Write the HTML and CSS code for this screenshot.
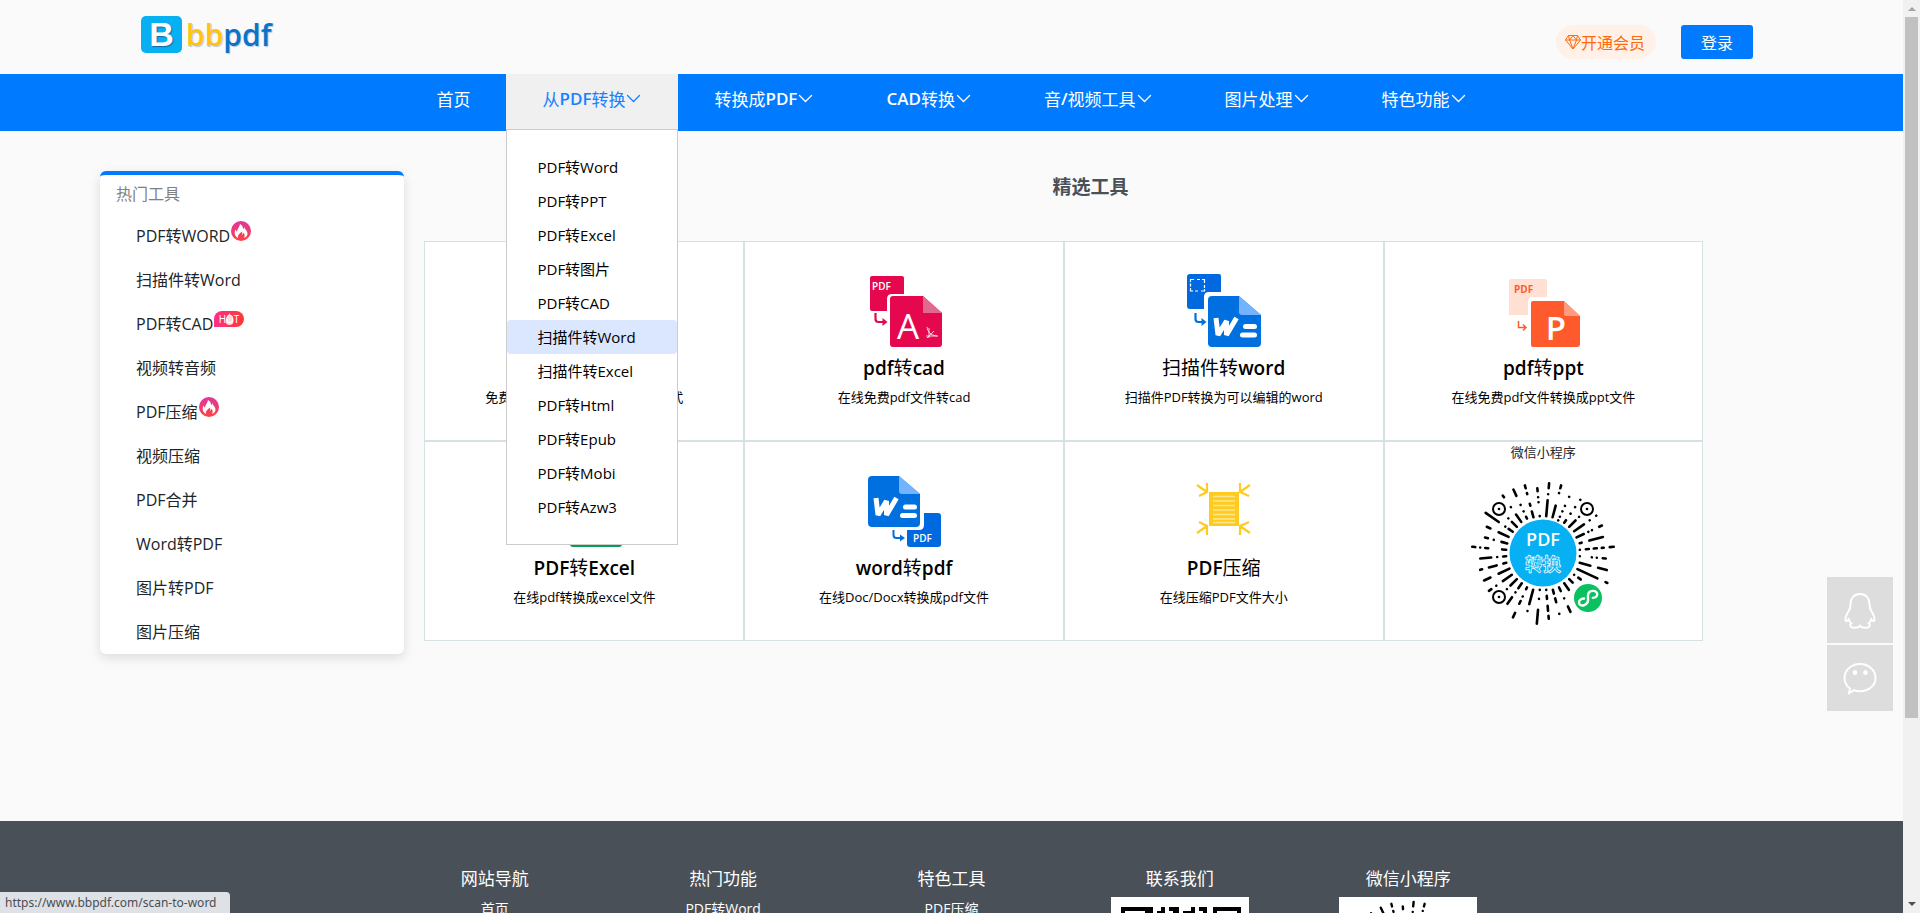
FILE: index.html
```html
<!DOCTYPE html>
<html lang="zh-CN">

<head>
    <meta charset="UTF-8">
    <meta name="viewport" content="width=device-width, initial-scale=1.0">
    <title>bbpdf</title>
    <link rel="stylesheet" href="styles.css">
</head>

<body>
    <!-- 公用图形 -->
    <svg class="defs" width="0" height="0" aria-hidden="true">
        <linearGradient id="fireBg" x1="0" y1="0" x2="0" y2="1">
            <stop offset="0" stop-color="#e0359f" />
            <stop offset="1" stop-color="#ff4340" />
        </linearGradient>
        <linearGradient id="hotBg">
            <stop offset="0" stop-color="#ff2d8d" />
            <stop offset="1" stop-color="#ff3a2f" />
        </linearGradient>
        <symbol id="down" viewBox="0 0 16 16">
            <path d="M2 5.500l6 6 6-6" fill="none" stroke="currentColor" stroke-width="1.300" stroke-linecap="round" />
        </symbol>
        <symbol id="fire" viewBox="0 0 20 20">
            <circle cx="10" cy="10" r="10" fill="url(#fireBg)" />
            <path d="M7 17C3.500 15 3 11.500 4.500 8.500L6 11c.2-3.500 2.500-4.500 3-8 2 1 3.200 2.800 3 5.500L13.500 6c-.1 2 3 3.500 3 6.500 0 2-1.300 3.700-3.500 4.500 1-2 .7-4-.3-5.300L11.500 14c-.2-1.500-.2-2.500-.8-3.500C9.500 12.500 6 13.500 7 17z" fill="#fff" />
        </symbol>
        <symbol id="mini" viewBox="-75 -75 150 150">
            <g fill="none" stroke="#000" stroke-width="2.600" stroke-linecap="round">
                <path transform="rotate(5)" d="M0-37V-53M0-59v0M0-65V-70" />
                <path transform="rotate(15)" d="M0-37V-49M0-62v0M0-67V-70" />
                <path transform="rotate(25)" d="M0-36v0M0-40v0M0-46v0M0-52v0M0-62v0" />
                <path transform="rotate(35)" d="M0-37V-40M0-48v0M0-56v0M0-65v0" />
                <path transform="rotate(45)" d="M0-37V-46M0-51v0" />
                <path transform="rotate(55)" d="M0-38V-50M0-57v0M0-65v0" />
                <path transform="rotate(65)" d="M0-37V-45M0-50v0M0-54v0M0-62V-65" />
                <path transform="rotate(75)" d="M0-38V-40M0-48V-62" />
                <path transform="rotate(85)" d="M0-37v0M0-43V-46M0-51V-54M0-59V-61M0-67V-71" />
                <path transform="rotate(95)" d="M0-37v0M0-49v0M0-54v0M0-60V-63" />
                <path transform="rotate(105)" d="M0-38V-49M0-57V-66" />
                <path transform="rotate(115)" d="M0-38V-60M0-69V-71" />
                <path transform="rotate(125)" d="M0-38v0M0-43V-46" />
                <path transform="rotate(135)" d="M0-37V-42" />
                <path transform="rotate(145)" d="M0-37V-45" />
                <path transform="rotate(155)" d="M0-38V-42M0-50v0M0-59V-65" />
                <path transform="rotate(165)" d="M0-38V-42M0-47V-51M0-63v0" />
                <path transform="rotate(175)" d="M0-37v0M0-43V-46M0-53V-58M0-63V-66" />
                <path transform="rotate(185)" d="M0-37v0M0-46v0M0-57V-71" />
                <path transform="rotate(195)" d="M0-38V-53M0-60v0" />
                <path transform="rotate(205)" d="M0-38V-40M0-48v0M0-53V-56M0-66V-71" />
                <path transform="rotate(215)" d="M0-37V-43M0-48v0M0-54V-62" />
                <path transform="rotate(225)" d="M0-37V-46M0-51v0" />
                <path transform="rotate(235)" d="M0-38V-49M0-57v0M0-63V-66" />
                <path transform="rotate(245)" d="M0-37V-49M0-58V-65" />
                <path transform="rotate(255)" d="M0-38V-41M0-48V-56M0-63V-65" />
                <path transform="rotate(265)" d="M0-37V-40M0-46v0M0-52V-63" />
                <path transform="rotate(275)" d="M0-37V-41M0-55V-58M0-63v0M0-68V-71" />
                <path transform="rotate(285)" d="M0-37V-43M0-51v0M0-57V-60" />
                <path transform="rotate(295)" d="M0-38V-49M0-58V-62" />
                <path transform="rotate(305)" d="M0-37V-42M0-46v0M0-54V-70" />
                <path transform="rotate(315)" d="M0-37V-44M0-49v0" />
                <path transform="rotate(325)" d="M0-38V-47M0-56v0M0-68V-70" />
                <path transform="rotate(335)" d="M0-38V-40M0-46v0M0-53v0M0-63V-70" />
                <path transform="rotate(345)" d="M0-37V-43M0-49V-51M0-61V-62M0-67V-70" />
                <path transform="rotate(355)" d="M0-37v0M0-51v0M0-56v0M0-62V-65" />
            </g>
            <g fill="#fff" stroke="#000" stroke-width="2">
                <circle cx="-44" cy="-44" r="6" />
                <circle cx="44" cy="-44" r="6" />
                <circle cx="-44" cy="44" r="6" />
            </g>
            <circle cx="-44" cy="-44" r="1.300" />
            <circle cx="44" cy="-44" r="1.300" />
            <circle cx="-44" cy="44" r="1.300" />
            <circle r="33.500" fill="#06b0f2" />
            <text class="miniTop" y="-7">PDF</text>
            <text class="miniBottom" y="18">转换</text>
            <circle cx="45" cy="45" r="14" fill="#0ac160" />
            <path d="M41 45.500c-3.200.2-5.200 2-5 4.200.2 2.500 3 3.500 5.300 2.400 2-1 3.700-2.500 3.700-4.600v-5c0-2.500 2-4.300 4.700-4.600 2.800-.2 4.700 1.500 4.500 3.600-.2 2-2 3.200-4.400 3.400" fill="none" stroke="#fff" stroke-width="2.400" stroke-linecap="round" />
        </symbol>
    </svg>

    <header class="header">
        <a class="logo" href="#">
            <span class="logoMark">B</span>
            <span class="logoText"><b>bb</b>pdf</span>
        </a>
        <div class="user">
            <a class="vip" href="#">
                <svg width="16" height="16" viewBox="0 0 16 16" fill="none" stroke="currentColor" stroke-width="1" stroke-linejoin="round">
                    <path d="M3.500 1.500h9l3 4.500L8 15 .5 6zM.5 6h15M4.500 6L8 15l3.500-9M3.500 1.500l1 4.500L8 1.500 11.500 6l1-4.500" />
                </svg>开通会员</a>
            <button class="login" type="button">登录</button>
        </div>
    </header>

    <nav class="nav">
        <ul class="menu">
            <li><a href="#">首页</a></li>
            <li class="open">
                <a href="#">从<b>PDF</b>转换<svg><use href="#down" /></svg></a>
                <ul class="dropdown">
                    <li><a href="#">PDF转Word</a></li>
                    <li><a href="#">PDF转PPT</a></li>
                    <li><a href="#">PDF转Excel</a></li>
                    <li><a href="#">PDF转图片</a></li>
                    <li><a href="#">PDF转CAD</a></li>
                    <li><a class="active" href="#">扫描件转Word</a></li>
                    <li><a href="#">扫描件转Excel</a></li>
                    <li><a href="#">PDF转Html</a></li>
                    <li><a href="#">PDF转Epub</a></li>
                    <li><a href="#">PDF转Mobi</a></li>
                    <li><a href="#">PDF转Azw3</a></li>
                </ul>
            </li>
            <li><a href="#">转换成<b>PDF</b><svg><use href="#down" /></svg></a></li>
            <li><a href="#"><b>CAD</b>转换<svg><use href="#down" /></svg></a></li>
            <li><a href="#">音<b>/</b>视频工具<svg><use href="#down" /></svg></a></li>
            <li><a href="#">图片处理<svg><use href="#down" /></svg></a></li>
            <li><a href="#">特色功能<svg><use href="#down" /></svg></a></li>
        </ul>
    </nav>

    <div class="content">
        <aside class="side">
            <h3>热门工具</h3>
            <ul>
                <li><a href="#">PDF转WORD<svg class="fire"><use href="#fire" /></svg></a></li>
                <li><a href="#">扫描件转Word</a></li>
                <li><a href="#">PDF转CAD<svg class="hot" viewBox="0 0 30 16">
                            <path d="M8 0h14a8 8 0 0 1 0 16H0V8a8 8 0 0 1 8-8z" fill="url(#hotBg)" />
                            <path d="M15.500 2c.5 2 4 4 4 8a4 4 0 0 1-8 0c0-3 3-5 4-8z" fill="#fff" opacity=".8" />
                            <text x="15" y="12">HOT</text>
                        </svg></a></li>
                <li><a href="#">视频转音频</a></li>
                <li><a href="#">PDF压缩<svg class="fire"><use href="#fire" /></svg></a></li>
                <li><a href="#">视频压缩</a></li>
                <li><a href="#">PDF合并</a></li>
                <li><a href="#">Word转PDF</a></li>
                <li><a href="#">图片转PDF</a></li>
                <li><a href="#">图片压缩</a></li>
            </ul>
        </aside>

        <main class="main">
            <h2>精选工具</h2>
            <div class="tools">
                <a class="tool" href="#">
                    <svg viewBox="0 0 80 80">
                        <rect x="6" y="6" width="34" height="34" rx="3" fill="#0069e0" />
                        <rect x="24" y="24" width="54" height="54" rx="4" fill="#0070e0" stroke="#fff" stroke-width="3" />
                    </svg>
                    <h4><b>PDF</b>转<b>Word</b></h4>
                    <p>免费在线PDF文件转换为word格式</p>
                </a>
                <a class="tool" href="#">
                    <svg viewBox="0 0 80 80">
                        <path d="M8 6h30q2 0 2 2v16H28q-5 0-5 5v12H8q-2 0-2-2V8q0-2 2-2z" fill="#e6084f" />
                        <text class="tag" x="8" y="20">PDF</text>
                        <path d="M29 26h30l19 17v31q0 3-3 3H29q-3 0-3-3V29q0-3 3-3z" fill="#e6084f" />
                        <path d="M59 26l19 17H59z" fill="#e0698f" />
                        <path d="M11.500 43v6q0 3 3 3H20" fill="none" stroke="#e6084f" stroke-width="2.200" />
                        <path d="M18.500 48l5 4-5 4z" fill="#e6084f" />
                        <text class="letter" x="44" y="69">A</text>
                        <path d="M63 57c1 5 3 8 10 9M62 66h12M65 58v10M63 68l7-7" fill="none" stroke="#fff" stroke-width=".8" />
                    </svg>
                    <h4><b>pdf</b>转<b>cad</b></h4>
                    <p>在线免费pdf文件转cad</p>
                </a>
                <a class="tool" href="#">
                    <svg viewBox="0 0 80 80">
                        <path d="M6 4h29q2 0 2 2v16H25q-5 0-5 5v12H6q-3 0-3-3V7q0-3 3-3z" fill="#0069e0" />
                        <path d="M6.500 12V9.500H10M13 9.500h3M18 9.500h2.500V13M20.500 15v3M20.500 19v2H17M14 21h-3M9 21H6.500v-3M6.500 16.500v-3" fill="none" stroke="#fff" stroke-width="1.200" />
                        <path d="M28 26h27l22 19v28q0 4-4 4H28q-4 0-4-4V30q0-4 4-4z" fill="#0070e0" />
                        <path d="M55 26l22 19H58q-3 0-3-3z" fill="#74b3ff" />
                        <path d="M11.500 43v6q0 3 3 3H19" fill="none" stroke="#0070e0" stroke-width="2.200" />
                        <path d="M17.500 48l5 4-5 4z" fill="#0070e0" />
                        <path d="M32 48l2 17L42.500 51v14L52.500 48" fill="none" stroke="#fff" stroke-width="5" stroke-linejoin="bevel" />
                        <path d="M61.500 56.500h9M58.500 65h12" stroke="#fff" stroke-width="5" stroke-linecap="round" />
                    </svg>
                    <h4>扫描件转<b>word</b></h4>
                    <p>扫描件PDF转换为可以编辑的word</p>
                </a>
                <a class="tool" href="#">
                    <svg viewBox="0 0 80 80">
                        <path d="M8 9h34q2 0 2 2v16H30q-5 0-5 5v13H6V11q0-2 2-2z" fill="#ffe0d3" />
                        <text class="tag bold orange" x="11" y="23">PDF</text>
                        <path d="M30 31h31l16 15v28q0 3-3 3H30q-2 0-2-2V33q0-2 2-2z" fill="#ff5a2c" />
                        <path d="M61 31l16 15H63q-2 0-2-2z" fill="#ff9c80" />
                        <path d="M15.500 51v6.500H22M20 54.500l3 3-3 3" fill="none" stroke="#ff5a2c" stroke-width="1.500" />
                        <text class="letter bold" x="53" y="70">P</text>
                    </svg>
                    <h4><b>pdf</b>转<b>ppt</b></h4>
                    <p>在线免费pdf文件转换成ppt文件</p>
                </a>
                <a class="tool" href="#">
                    <svg viewBox="0 0 80 80">
                        <rect x="6" y="6" width="34" height="34" rx="3" fill="#069f53" />
                        <rect x="26" y="26" width="52" height="51" rx="3" fill="#069f53" />
                    </svg>
                    <h4><b>PDF</b>转<b>Excel</b></h4>
                    <p>在线pdf转换成excel文件</p>
                </a>
                <a class="tool" href="#">
                    <svg viewBox="0 0 80 80">
                        <path d="M8 6h27l21 18v29q0 4-4 4H8q-4 0-4-4V10q0-4 4-4z" fill="#0070e0" />
                        <path d="M35 6l21 18H38q-3 0-3-3z" fill="#74b3ff" />
                        <path d="M12 28l2 17L22.500 31v14L32.500 28" fill="none" stroke="#fff" stroke-width="5" stroke-linejoin="bevel" />
                        <path d="M41.500 37h9M38.500 45.500h12" stroke="#fff" stroke-width="5" stroke-linecap="round" />
                        <path d="M60 43h14q3 0 3 3v28q0 3-3 3H46q-3 0-3-3V60h12q5 0 5-5z" fill="#0069e0" />
                        <text class="tag" x="49" y="72">PDF</text>
                        <path d="M29.500 60v5q0 3 3 3H37" fill="none" stroke="#0070e0" stroke-width="2" />
                        <path d="M36 64.500l5 3.500-5 3.500z" fill="#0070e0" />
                    </svg>
                    <h4><b>word</b>转<b>pdf</b></h4>
                    <p>在线Doc/Docx转换成pdf文件</p>
                </a>
                <a class="tool" href="#">
                    <svg viewBox="0 0 80 80">
                        <rect x="25" y="22" width="30" height="34" fill="#ffcb1f" />
                        <path d="M29 26.500h22M29 31h22M29 35.500h22M29 40h22M29 44.500h22M29 49h22M29 52.500h22" stroke="#ffe88f" stroke-width="1.300" />
                        <path d="M13 15l10 7M23 13v9l-8 4M66 15l-10 7M56 13v9l9 4M13 63l10-7M23 65v-9l-8-4M66 63l-10-7M56 65v-9l9-4" fill="none" stroke="#ffcb1f" stroke-width="2.200" />
                    </svg>
                    <h4><b>PDF</b>压缩</h4>
                    <p>在线压缩PDF文件大小</p>
                </a>
                <div class="tool code">
                    <p>微信小程序</p>
                    <svg><use href="#mini" /></svg>
                </div>
            </div>
        </main>
    </div>

    <footer class="footer">
        <dl>
            <dt>网站导航</dt>
            <dd><a href="#">首页</a></dd>
        </dl>
        <dl>
            <dt>热门功能</dt>
            <dd><a href="#">PDF转Word</a></dd>
        </dl>
        <dl>
            <dt>特色工具</dt>
            <dd><a href="#">PDF压缩</a></dd>
        </dl>
        <dl>
            <dt>联系我们</dt>
            <dd class="qr">
                <svg viewBox="0 0 138 138">
                    <path fill="none" stroke="#000" stroke-width="4" d="M12 12h24v24H12zM104 12h24v24h-24zM12 104h24v24H12z" />
                    <path d="M18 18h12v12H18zM110 18h12v12h-12zM18 110h12v12H18zM38 10h4v8h-4zM46 14h4v-4h4v8h-8zM58 10h10v8h-6v-4h-4zM72 14h8v-4h4v12h-4v-4h-8zM88 10h8v12h-4v-8h-4zM38 22h8v8h-8zM54 22h12v4H54zM84 26h8v8h-8zM12 44h8v12h12v-8h20v12h12V48h20v16h12V44h30v12h-12v12h12v20H96V72H80v16H64v20H48V88H32V72H12zM56 112h16v8h12v-12h12v20H52z" />
                </svg>
            </dd>
        </dl>
        <dl>
            <dt>微信小程序</dt>
            <dd class="qr"><svg><use href="#mini" /></svg></dd>
        </dl>
    </footer>

    <div class="float">
        <a href="#" aria-label="QQ">
            <svg viewBox="0 0 40 40">
                <path d="M20 4c-6 0-9.500 4.500-9.500 10 0 3-.5 4.500-1.500 6.500-2 3.500-4 6-3.500 10 .5 1.500 2 .5 3.200-1.200.5 1.700 1.300 3 2.500 4.200-1.500 1-1.700 3.500 1.300 4 3 .4 6 0 7.500-1.700 1.500 1.700 4.500 2.100 7.500 1.700 3-.5 2.800-3 1.300-4 1.200-1.200 2-2.500 2.500-4.200 1.200 1.700 2.700 2.700 3.200 1.200.5-4-1.500-6.500-3.500-10-1-2-1.500-3.500-1.500-6.500C29.500 8.500 26 4 20 4z" />
            </svg>
        </a>
        <a href="#" aria-label="微信">
            <svg viewBox="0 0 40 40">
                <path d="M20 6C11.500 6 4.500 12 4.500 20c0 4.500 2 8 5.500 10.500l-1 4.500 5-2.700c2 .7 4 1 6 1 8.500 0 15.500-5.500 15.500-13.300S28.500 6 20 6z" />
                <ellipse class="eye" cx="15" cy="14.500" rx="2.300" ry="2.500" />
                <ellipse class="eye" cx="25.500" cy="14.500" rx="2.300" ry="2.500" />
            </svg>
        </a>
    </div>

    <div class="status">https://www.bbpdf.com/scan-to-word</div>

    <div class="scroll">
        <i class="up"></i>
        <div class="thumb"></div>
        <i class="down"></i>
    </div>
</body>

</html>
```
FILE: styles.css
```css
* {
    padding: 0;
    margin: 0;
    box-sizing: border-box;
}

body {
    height: 100vh;
    padding-right: 17px;
    overflow: hidden;
    color: #212529;
    background-color: #fafafa;
    font-family: "Open Sans", "Noto Sans CJK SC", sans-serif;
    font-size: 16px;
}

ul {
    list-style: none;
}

a {
    color: inherit;
    text-decoration: none;
}

.defs {
    position: absolute;
}

/* 头部 */
.header {
    display: flex;
    justify-content: space-between;
    height: 74px;
    padding: 16px 150px 0 141px;
}

.logo {
    display: flex;
    gap: 4px;
    height: 37px;
    line-height: 37px;
}

.logoMark {
    width: 41px;
    border-radius: 5px;
    color: #fff;
    background-color: #06b0f2;
    font: bold 34px/37px "Liberation Sans", sans-serif;
    text-align: center;
    text-shadow: 1px 1px 1px #1769a5;
}

.logoText {
    color: #0c74c8;
    font-size: 30px;
    font-weight: 600;
    text-shadow: 1px 1px 1px #b9c6df;
}

.logoText b {
    color: #ffc40c;
    font-weight: 600;
}

.user {
    display: flex;
    gap: 25px;
    padding-top: 9px;
}

.vip {
    display: flex;
    align-items: center;
    width: 100px;
    height: 34px;
    padding-left: 9px;
    border-radius: 17px;
    color: #ff6a0e;
    background-color: #fff1e8;
}

.login {
    width: 72px;
    height: 34px;
    border: none;
    border-radius: 3px;
    color: #fff;
    background-color: #007bff;
    font: inherit;
}

/* 导航 */
.nav {
    height: 57px;
    background-color: #007bff;
}

.menu {
    display: flex;
    justify-content: center;
}

.menu > li {
    position: relative;
    height: 55px;
}

.menu > li > a {
    display: flex;
    align-items: center;
    height: 48px;
    padding: 0 36px;
    color: #fff;
    font-size: 17px;
}

.menu b {
    font-weight: 600;
}

.menu > li > a svg {
    width: 17px;
    height: 16px;
}

.menu > .open {
    background-color: #f0f0f0;
}

.menu > .open > a {
    color: #1a80ff;
}

.dropdown {
    position: absolute;
    top: 55px;
    left: 0;
    z-index: 10;
    width: 100%;
    padding: 20px 0;
    border: 1px solid #ccc;
    background-color: #fff;
}

.dropdown a {
    display: block;
    padding-left: 30px;
    border-radius: 4px;
    color: #000;
    font-size: 15px;
    line-height: 34px;
}

.dropdown .active {
    background-color: #dbe6ff;
}

/* 主体 */
.content {
    display: flex;
    align-items: flex-start;
    height: 690px;
    padding-top: 40px;
}

.side {
    width: 16%;
    margin: 0 20px 0 100px;
    border-top: 4px solid #007bff;
    border-radius: 6px;
    background-color: #fff;
    box-shadow: 0 4px 12px rgba(0, 0, 0, .12);
}

.side h3 {
    height: 39px;
    padding-left: 16px;
    color: #808080;
    font-size: 16px;
    font-weight: normal;
    line-height: 38px;
}

.side li {
    height: 44px;
    padding-left: 36px;
    line-height: 44px;
}

.side li a {
    display: flex;
    gap: 1px;
}

.fire {
    width: 20px;
    height: 20px;
    margin-top: 7px;
}

.hot {
    width: 30px;
    height: 16px;
    margin-top: 9px;
}

.hot text {
    fill: #fff;
    font-size: 10px;
    text-anchor: middle;
}

.main {
    width: 70%;
}

.main h2 {
    height: 70px;
    color: #495057;
    font-size: 19px;
    line-height: 32px;
    text-align: center;
}

.tools {
    display: grid;
    grid-template-columns: repeat(4, 24%);
}

.tool {
    height: 200px;
    padding-top: 28px;
    border: 1px solid #d6e1e4;
    color: #000;
    background-color: #fff;
    text-align: center;
}

.tool svg {
    display: block;
    width: 80px;
    height: 80px;
    margin: 0 auto;
}

.tool h4 {
    font-size: 19px;
    font-weight: normal;
    line-height: 36px;
}

.tool b {
    font-weight: 600;
}

.tool p {
    font-size: 13px;
    line-height: 22px;
}

.tool.code {
    padding-top: 0;
    color: #212529;
}

.tool.code p {
    line-height: 20px;
}

.tool.code svg {
    width: 150px;
    height: 150px;
    margin-top: 16px;
}

.tag {
    fill: #fff;
    font-size: 10px;
    font-weight: 600;
}

.letter {
    fill: #fff;
    font-size: 35px;
    text-anchor: middle;
}

.bold {
    font-weight: bold;
}

.orange {
    fill: #ff5a2c;
}

.letter.bold {
    font-size: 33px;
    font-weight: 600;
}

.miniTop {
    fill: #fff;
    font-size: 18px;
    font-weight: 600;
    text-anchor: middle;
}

.miniBottom {
    fill: #06b0f2;
    stroke: #fff;
    stroke-width: .7px;
    font-size: 18px;
    font-weight: bold;
    text-anchor: middle;
}

/* 底部 */
.footer {
    display: flex;
    justify-content: center;
    height: 360px;
    padding-top: 44px;
    color: #fff;
    background-color: #495057;
    text-align: center;
}

.footer dl {
    width: 12%;
}

.footer dt {
    height: 32px;
    font-size: 17px;
    line-height: 28px;
}

.footer dd {
    font-size: 14px;
    line-height: 24px;
}

.footer .qr svg {
    width: 138px;
    height: 138px;
    background-color: #fff;
}

/* 右侧悬浮 */
.float {
    position: fixed;
    top: 577px;
    right: 27px;
}

.float a {
    display: flex;
    align-items: center;
    justify-content: center;
    width: 66px;
    height: 66px;
    margin-bottom: 2px;
    background-color: #ddd;
}

.float svg {
    width: 40px;
    height: 40px;
    fill: none;
    stroke: #fff;
    stroke-width: 2px;
}

.float .eye {
    fill: #fff;
    stroke: none;
}

.status {
    position: fixed;
    bottom: 0;
    left: 0;
    width: 230px;
    height: 21px;
    padding-left: 5px;
    border-radius: 0 4px 0 0;
    color: #4a4d51;
    background-color: #dee1e6;
    font-family: "Noto Sans", sans-serif;
    font-size: 12px;
    line-height: 21px;
    white-space: nowrap;
}

/* 滚动条 */
.scroll {
    position: fixed;
    top: 0;
    right: 0;
    bottom: 0;
    display: flex;
    flex-direction: column;
    align-items: center;
    justify-content: space-between;
    width: 17px;
    padding: 7px 0;
    background-color: #f1f1f1;
}

.scroll .thumb {
    width: 13px;
    height: 78%;
    margin: 6px 0 auto;
    background-color: #c1c1c1;
}

.scroll i {
    border-left: 4px solid transparent;
    border-right: 4px solid transparent;
}

.scroll .up {
    border-bottom: 4px solid #a3a3a3;
}

.scroll .down {
    border-top: 4px solid #505050;
}
```
